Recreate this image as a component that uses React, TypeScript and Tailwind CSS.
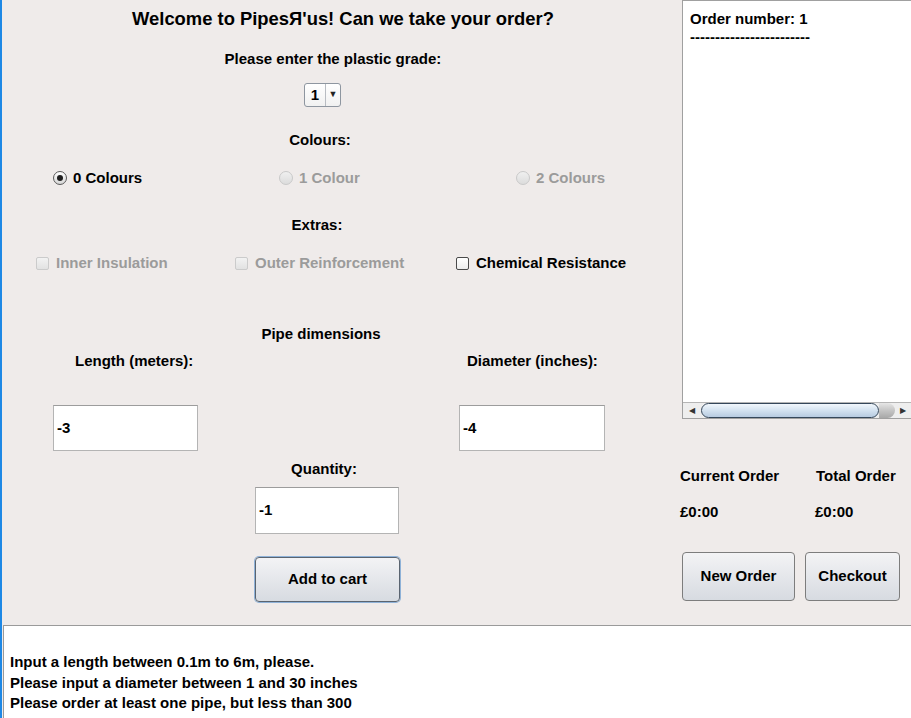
import React from "react";

const font = { fontFamily: '"Liberation Sans", Arial, sans-serif' };

function Radio({ checked, disabled }: { checked?: boolean; disabled?: boolean }) {
  return (
    <span
      className={
        "inline-flex items-center justify-center w-[14px] h-[14px] rounded-full border " +
        (disabled
          ? "border-[#c9c9c9] bg-gradient-to-b from-[#f0f0f0] to-[#dcdcdc]"
          : "border-[#5a5a5a] bg-gradient-to-b from-[#ffffff] to-[#d6d6d6]")
      }
    >
      {checked && <span className="w-[6px] h-[6px] rounded-full bg-[#1e1e1e]" />}
    </span>
  );
}

function Check({ disabled }: { disabled?: boolean }) {
  return (
    <span
      className={
        "inline-block w-[13px] h-[13px] rounded-[2px] border " +
        (disabled
          ? "border-[#cbcbcb] bg-gradient-to-b from-[#f2f2f2] to-[#e2e2e2]"
          : "border-[#4a4a4a] bg-gradient-to-b from-[#ffffff] to-[#ececec]")
      }
    />
  );
}

function Btn({ label, w, h, focus }: { label: string; w: string; h: string; focus?: boolean }) {
  return (
    <div
      className={
        "flex items-center justify-center rounded-[4px] bg-gradient-to-b from-[#f3f3f5] to-[#d7dbe1] text-[15px] font-bold text-black " +
        w +
        " " +
        h +
        (focus
          ? " border border-[#5a6470] shadow-[0_0_0_1px_#8fb2d8]"
          : " border border-[#7d7d7d]")
      }
    >
      {label}
    </div>
  );
}

function Field({ value, w, h }: { value: string; w: string; h: string }) {
  return (
    <div
      className={
        "flex items-center bg-white border border-[#b4b4b4] border-t-[#9c9c9c] pl-[3px] text-[15px] font-bold text-black " +
        w +
        " " +
        h
      }
    >
      {value}
    </div>
  );
}

export default function App() {
  return (
    <div className="w-[911px] h-[718px] flex bg-[#efebea] overflow-hidden" style={font}>
      <div className="w-[2px] h-full bg-[#1e88e5] shrink-0" />
      <div className="flex flex-col w-[909px] h-full">
        <div className="flex h-[625px]">
          {/* Left column */}
          <div className="w-[678px] flex flex-col text-black">
            <div className="h-[37px] pl-[4px] flex items-center justify-center text-[18.4px] font-bold">
              Welcome to PipesЯ'us! Can we take your order?
            </div>
            <div className="mt-[11px] h-[22px] w-[662px] flex items-center justify-center text-[15px] font-bold">
              Please enter the plastic grade:
            </div>
            <div className="mt-[13px] h-[24px] pl-[302px] flex">
              <div className="w-[37px] h-[24px] rounded-[3px] border border-[#8e96a0] bg-gradient-to-b from-white to-[#f1f1f1] flex items-center">
                <span className="w-[20px] text-center text-[15px] font-bold">1</span>
                <span className="h-full w-px bg-[#b8bcc2]" />
                <span className="flex-1 flex items-center justify-center text-[9px] text-[#222]">▼</span>
              </div>
            </div>
            <div className="mt-[22px] h-[22px] w-[636px] flex items-center justify-center text-[15px] font-bold">
              Colours:
            </div>
            <div className="mt-[16px] h-[22px] pl-[51px] flex items-center text-[15px] font-bold">
              <div className="w-[226px] flex items-center gap-[6px]">
                <Radio checked />
                <span>0 Colours</span>
              </div>
              <div className="w-[237px] flex items-center gap-[6px] text-[#9b9b9b]">
                <Radio disabled />
                <span>1 Colour</span>
              </div>
              <div className="flex items-center gap-[6px] text-[#9b9b9b]">
                <Radio disabled />
                <span>2 Colours</span>
              </div>
            </div>
            <div className="mt-[25px] h-[22px] w-[630px] flex items-center justify-center text-[15px] font-bold">
              Extras:
            </div>
            <div className="mt-[16px] h-[22px] pl-[34px] flex items-center text-[15px] font-bold">
              <div className="w-[199px] flex items-center gap-[7px] text-[#9b9b9b]">
                <Check disabled />
                <span>Inner Insulation</span>
              </div>
              <div className="w-[221px] flex items-center gap-[7px] text-[#9b9b9b]">
                <Check disabled />
                <span>Outer Reinforcement</span>
              </div>
              <div className="flex items-center gap-[7px]">
                <Check />
                <span>Chemical Resistance</span>
              </div>
            </div>
            <div className="mt-[49px] h-[22px] w-[638px] flex items-center justify-center text-[15px] font-bold">
              Pipe dimensions
            </div>
            <div className="mt-[5px] h-[22px] pl-[73px] flex items-center text-[15px] font-bold">
              <span className="w-[392px]">Length (meters):</span>
              <span>Diameter (inches):</span>
            </div>
            <div className="mt-[33px] pl-[51px] flex">
              <Field value="-3" w="w-[145px]" h="h-[46px]" />
              <div className="w-[261px]" />
              <Field value="-4" w="w-[146px]" h="h-[46px]" />
            </div>
            <div className="mt-[7px] h-[22px] w-[644px] flex items-center justify-center text-[15px] font-bold">
              Quantity:
            </div>
            <div className="mt-[7px] pl-[253px] flex">
              <Field value="-1" w="w-[144px]" h="h-[47px]" />
            </div>
            <div className="mt-[23px] pl-[253px] flex">
              <Btn label="Add to cart" w="w-[145px]" h="h-[45px]" focus />
            </div>
          </div>
          {/* Right column */}
          <div className="flex-1 flex flex-col">
            <div className="ml-[2px] h-[419px] bg-white border border-r-0 border-[#a0a0a0] flex flex-col">
              <div className="flex-1 pl-[7px] pt-[8px] text-[15px] font-bold text-black leading-[20px]">
                <div>Order number: 1</div>
                <div className="-mt-[2px]">------------------------</div>
              </div>
              <div className="h-[16px] bg-[#eeeeee] border-t border-[#b5b5b5] flex items-center">
                <span className="w-[18px] flex justify-center text-[8px] text-[#333]">◀</span>
                <div className="w-[178px] h-[15px] rounded-full border border-[#35475a] bg-gradient-to-b from-[#f2f7fc] via-[#d3e2f0] to-[#b7cbe0]" />
                <div className="w-[16px] h-[15px] rounded-r-full bg-gradient-to-b from-[#e6e6e6] via-[#c4c4c4] to-[#a8a8a8]" />
                <span className="flex-1 flex justify-center text-[8px] text-[#333]">▶</span>
              </div>
            </div>
            <div className="mt-[47px] h-[20px] flex items-center text-[15px] font-bold text-black">
              <span className="w-[136px]">Current Order</span>
              <span>Total Order</span>
            </div>
            <div className="mt-[16px] h-[20px] flex items-center text-[15px] font-bold text-black">
              <span className="w-[135px]">£0:00</span>
              <span>£0:00</span>
            </div>
            <div className="mt-[30px] pl-[2px] flex gap-[10px]">
              <Btn label="New Order" w="w-[113px]" h="h-[49px]" />
              <Btn label="Checkout" w="w-[95px]" h="h-[49px]" />
            </div>
          </div>
        </div>
        <div className="ml-[1px] flex-1 bg-white border-t border-l border-[#9a9a9a] pl-[6px] pt-[26px] text-[15px] font-bold text-black leading-[20.5px]">
          <div>Input a length between 0.1m to 6m, please.</div>
          <div>Please input a diameter between 1 and 30 inches</div>
          <div>Please order at least one pipe, but less than 300</div>
        </div>
      </div>
    </div>
  );
}
